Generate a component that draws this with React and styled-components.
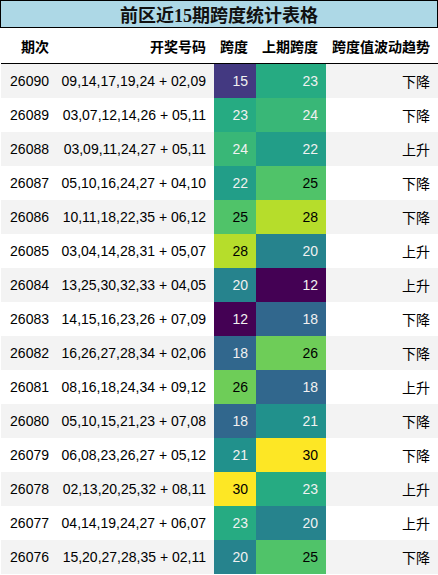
import React from "react";
import styled, { createGlobalStyle } from "styled-components";

const GlobalStyle = createGlobalStyle`
  body {
    margin: 0;
    background: #ffffff;
    font-family: "Liberation Sans", "Noto Sans CJK SC", sans-serif;
  }
`;

const Page = styled.div`
  width: 438px;
  display: flex;
  flex-direction: column;
`;

const Title = styled.div`
  height: 26px;
  border: 1px solid #000;
  background: #add8e6;
  display: flex;
  align-items: center;
  justify-content: center;
  font-family: "Liberation Serif", "Noto Sans CJK SC", serif;
  font-weight: bold;
  font-size: 18px;
  color: #111;
`;

const Row = styled.div`
  display: grid;
  grid-template-columns: 56px 157px 42px 70px 112px;
  height: ${(p) => (p.$head ? "35px" : "34px")};
  margin-left: 1px;
  background: ${(p) => (p.$shade ? "#f3f3f3" : "#ffffff")};
  border-bottom: ${(p) => (p.$head ? "1px solid #000" : "none")};
`;

const Cell = styled.div`
  display: flex;
  align-items: center;
  justify-content: flex-end;
  padding: 0 8px;
  font-size: 14px;
  font-weight: ${(p) => (p.$head ? "bold" : "normal")};
  color: ${(p) => p.$fg || "#000"};
  background: ${(p) => p.$bg || "transparent"};
  white-space: nowrap;
`;

const stops = [
  [0x44, 0x01, 0x54],
  [0x48, 0x24, 0x75],
  [0x41, 0x44, 0x87],
  [0x35, 0x5f, 0x8d],
  [0x2a, 0x78, 0x8e],
  [0x21, 0x91, 0x8c],
  [0x22, 0xa8, 0x84],
  [0x44, 0xbf, 0x70],
  [0x7a, 0xd1, 0x51],
  [0xbd, 0xdf, 0x26],
  [0xfd, 0xe7, 0x25],
];

const viridis = (v) => {
  const t = Math.min(1, Math.max(0, (v - 12) / 18)) * 10;
  const i = Math.min(9, Math.floor(t));
  const f = t - i;
  const c = stops[i].map((a, k) => Math.round(a + (stops[i + 1][k] - a) * f));
  const lum = (0.299 * c[0] + 0.587 * c[1] + 0.114 * c[2]) / 255;
  return { bg: `rgb(${c.join(",")})`, fg: lum > 0.55 ? "#000" : "#f1f1f1" };
};

const rows = [
  ["26090", "09,14,17,19,24 + 02,09", 15, 23, "下降"],
  ["26089", "03,07,12,14,26 + 05,11", 23, 24, "下降"],
  ["26088", "03,09,11,24,27 + 05,11", 24, 22, "上升"],
  ["26087", "05,10,16,24,27 + 04,10", 22, 25, "下降"],
  ["26086", "10,11,18,22,35 + 06,12", 25, 28, "下降"],
  ["26085", "03,04,14,28,31 + 05,07", 28, 20, "上升"],
  ["26084", "13,25,30,32,33 + 04,05", 20, 12, "上升"],
  ["26083", "14,15,16,23,26 + 07,09", 12, 18, "下降"],
  ["26082", "16,26,27,28,34 + 02,06", 18, 26, "下降"],
  ["26081", "08,16,18,24,34 + 09,12", 26, 18, "上升"],
  ["26080", "05,10,15,21,23 + 07,08", 18, 21, "下降"],
  ["26079", "06,08,23,26,27 + 05,12", 21, 30, "下降"],
  ["26078", "02,13,20,25,32 + 08,11", 30, 23, "上升"],
  ["26077", "04,14,19,24,27 + 06,07", 23, 20, "上升"],
  ["26076", "15,20,27,28,35 + 02,11", 20, 25, "下降"],
];

const SpanCell = ({ value }) => {
  const c = viridis(value);
  return (
    <Cell $bg={c.bg} $fg={c.fg}>
      {value}
    </Cell>
  );
};

export default function App() {
  return (
    <Page>
      <GlobalStyle />
      <Title>前区近15期跨度统计表格</Title>
      <Row $head>
        <Cell $head>期次</Cell>
        <Cell $head>开奖号码</Cell>
        <Cell $head>跨度</Cell>
        <Cell $head>上期跨度</Cell>
        <Cell $head>跨度值波动趋势</Cell>
      </Row>
      {rows.map(([issue, nums, span, prev, trend], i) => (
        <Row key={issue} $shade={i % 2 === 0}>
          <Cell>{issue}</Cell>
          <Cell>{nums}</Cell>
          <SpanCell value={span} />
          <SpanCell value={prev} />
          <Cell>{trend}</Cell>
        </Row>
      ))}
    </Page>
  );
}
